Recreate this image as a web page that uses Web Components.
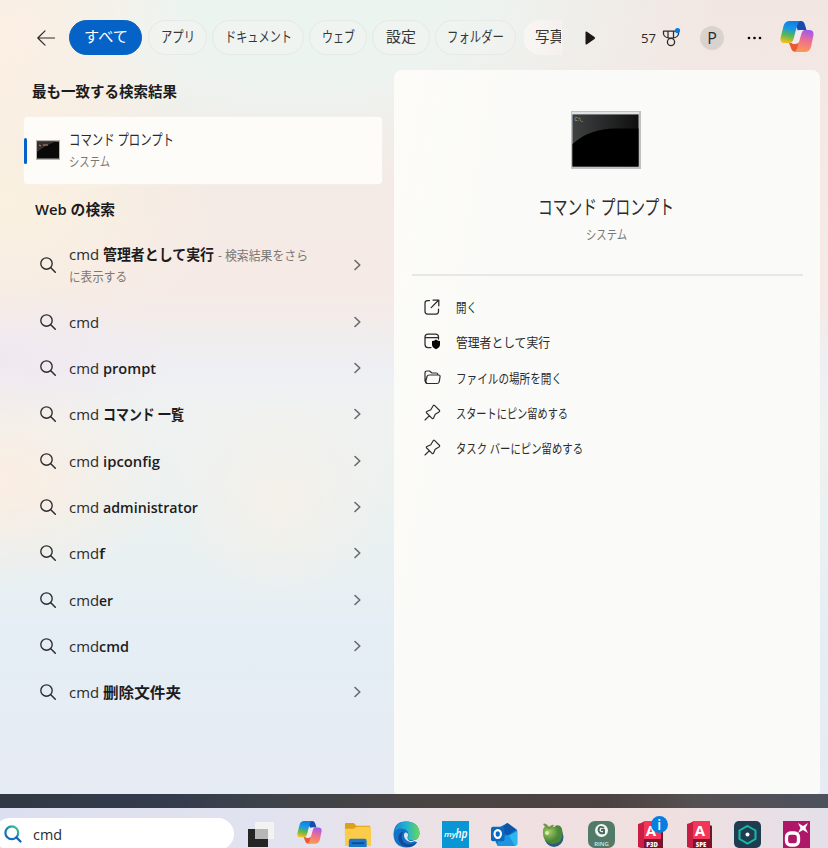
<!DOCTYPE html>
<html lang="ja"><head><meta charset="utf-8"><title>検索</title>
<style>html,body{margin:0;width:828px;height:848px;overflow:hidden;font-family:"Open Sans","Noto Sans CJK JP",sans-serif;color:#2b2b2d}</style></head>
<body><search-desktop></search-desktop>
<script>
const copilot='<defs><linearGradient id="a" x1=".6" y1="0" x2=".4" y2="1"><stop stop-color="#127de3"/><stop offset=".35" stop-color="#1698e6"/><stop offset=".68" stop-color="#5db84c"/><stop offset="1" stop-color="#f3bd20"/></linearGradient><linearGradient id="b" x1=".6" y1="0" x2=".4" y2="1"><stop stop-color="#a258ed"/><stop offset=".48" stop-color="#f0708d"/><stop offset="1" stop-color="#fb9a52"/></linearGradient></defs><path d="M9 22H14Q17 22 18 18L20 24L18 31H16Q12 31 11 27Z" fill="#ec5a35"/><path d="M17 0H21Q24 0 25 4L26.500 9H22Q20 9 19 12L16 5Z" fill="#164cac"/><path d="M9.500 0H20Q18 1 17 5L13.500 18Q12.500 22 9 22H4Q0 22 .5 17L3.500 5Q5 0 9.500 0Z" fill="url(#a)"/><path d="M24 9H29Q34 9 33.500 14L31 26Q29.500 31 25 31H14.500Q16.500 30 17.500 26L20.500 12Q21.500 9 24 9Z" fill="url(#b)"/><path d="M19.500 9H24Q22 10 21.300 13L19 21Q18 23 15 23H12Q13.500 22 14.500 18L16.500 11Q17 9 19.500 9Z" fill="#f3e9ee"/>';
const S='fill="none" stroke-linecap="round" stroke-linejoin="round" stroke="currentColor"';
const acad=(t)=>`<path d="M4 2L8 0V27H4L1 26V3Z" fill="#c91e43"/><path d="M7 0H24V18H7Z" fill="#f53558"/><path d="M24 4L26 5V27H24Z" fill="#6c1930"/><path d="M7 18H25V27H7Z" fill="#80102c"/><text x="14" y="14.500" font-size="15" font-weight="700" fill="#fff" text-anchor="middle">A</text><text x="15" y="25.500" font-size="6" font-weight="800" fill="#fff" text-anchor="middle">${t}</text>`;
const ICONS={
back:[18,16,`<path d="M17.500 8H.8M8 .8L.8 8L8 15.200" ${S} stroke-width="1.200"/>`],
search:[16,16,`<circle cx="6.500" cy="6.500" r="5.700" ${S} stroke-width="1.350"/><path d="M10.800 10.800L15.300 15.300" ${S} stroke-width="1.500"/>`],
chev:[7,12,`<path d="M1 1.500L5.800 6L1 10.500" fill="none" stroke-linecap="round" stroke-linejoin="round" stroke="#69696b" stroke-width="1.600"/>`],
play:[11,14,'<path d="M.5 1.500Q.5 0 2 .8L9.500 6Q10.800 7 9.500 8L2 13.200Q.5 14 .5 12.500Z" fill="#1d1717"/>'],
medal:[18,19,`<path d="M1.500 3H16.500V6Q16 9 11.500 10H6.500Q2 9 1.500 6ZM6 3V9.500M11.500 3V9.500" ${S} stroke-width="1.250"/><circle cx="9" cy="14" r="3.600" ${S} stroke-width="1.300"/><circle cx="15.500" cy="2.600" r="2.600" fill="#087be0"/>`],
dots:[16,4,'<circle cx="2" cy="2" r="1.350"/><circle cx="7.500" cy="2" r="1.350"/><circle cx="13" cy="2" r="1.350"/>'],
copilot:[34,32,copilot],
cmds:[24,20,'<path fill="#b9b4b1" d="M0 0H24V20H0Z"/><path fill="#090909" d="M1 1.500H23V18.500H1Z"/><path fill="#39302e" d="M1 1.500H20Q10 5 1 12Z"/><path d="M3 5L5 6M7 5H12" stroke="#b8887d"/>'],
cmd:[70,58,'<defs><linearGradient id="g" x2="1"><stop stop-color="#404142"/><stop offset="1" stop-color="#0f0f0f"/></linearGradient></defs><path fill="#c0c1c3" d="M0 0H70V58H0Z"/><path fill="#e1e2e3" d="M1 1H68V3H1Z"/><path fill="url(#g)" d="M1.500 3.500H67.500V55.500H1.500Z"/><path d="M1.500 33Q20 16 50 17.500H67.500V55.500H1.500Z"/><text x="3.500" y="10" font-size="5" fill="#bbb">C:\\_</text>'],
open:[16,16,`<path d="M5.500 1.500H3.500Q1 1.500 1 4V12.500Q1 15 3.500 15H12Q14.500 15 14.500 12.500V10M9 1H14.800V6.800M14.500 1.300L7.200 8.600" ${S} stroke-width="1.250"/>`],
admin:[17,17,`<path d="M7 14.500H4Q1 14.500 1 11.500V4Q1 1 4 1H11.500Q14.500 1 14.500 4V6M1 4.500H14.500" ${S} stroke-width="1.250"/><path d="M12 6.500Q13.800 8 16 8V11.500Q16 14.500 12 16.300Q8 14.500 8 11.500V8Q10.200 8 12 6.500Z" fill="#050505"/>`],
folder:[17,15,`<path d="M2.500 12.500L1 11V3Q1 1 3 1H5.500L8 3H12Q14 3 14 5M3 13.500Q1.300 13.500 1.700 11.500L3 6.500Q3.500 5 5 5H14.500Q16.400 5 16 7L15.200 11.800Q14.700 13.500 13 13.500Z" ${S} stroke-width="1.200"/>`],
pin:[17,17,`<path d="M1 16L5.200 11.800M10.500 1.400L15.600 6.500Q16 7.500 15 8L11.200 10.200L9.500 14.200Q9 15.200 8 14.300L2.700 9Q1.800 8 2.900 7.500L6.800 5.800L9 2Q9.700 .8 10.500 1.400Z" ${S} stroke-width="1.150"/>`],
bing:[18,18,'<defs><linearGradient id="a" x1="1" x2="0" y2="1"><stop stop-color="#52ce83"/><stop offset=".5" stop-color="#1686b7"/><stop offset="1" stop-color="#125ebb"/></linearGradient></defs><circle cx="7.800" cy="7.800" r="6.400" fill="none" stroke="url(#a)" stroke-width="2.200"/><path d="M12.500 12.500L16.500 16.500" stroke="#1263b7" stroke-width="2.300" stroke-linecap="round"/>'],
task:[27,27,'<path d="M1 8H21V26H1Z" fill="#252525"/><path d="M8 1H27V18H8Z" fill="#f3f3f2"/><path d="M8 8H21V18H8Z" fill="#b7b7b7"/>'],
files:[28,27,'<path d="M1 3Q1 2 2 2H10L13 5H27V15H1Z" fill="#dca01c"/><path d="M1 8H10L13 6H28V26H1Z" fill="#fbcb4a"/><path d="M5 21Q5 18.500 7 18.500H21.500Q23.500 18.500 23.500 21V27H5Z" fill="#1a78cc"/><path d="M8 22H21V24H8Z" fill="#0b4e96"/>'],
edge:[28,28,'<defs><linearGradient id="a" x2="1"><stop stop-color="#1987d5"/><stop offset=".5" stop-color="#23b4cc"/><stop offset="1" stop-color="#6cd658"/></linearGradient></defs><path d="M.5 14Q1 0 14 .5Q27 1 27.500 13Q27 20 20 20L25 22Q21 27.500 14 27.500Q1 27 .5 14Z" fill="#1272c6"/><path d="M1 12Q3 0 14 .5Q27 1 27.500 13Q27 20 20 20Q14 20 16 16Q17 9 10 8Q4 7 1 12Z" fill="url(#a)"/><path d="M11 11Q7 16 11 22Q16 26 25 22Q20 29 11 26Q4 22 6 15Q8 11 11 11Z" fill="#144a99"/><path d="M12.500 12Q17 12 15 17Q15 22 23 20.500Q17 24 13 19Q10 15 12.500 12Z" fill="#e5e3ec"/>'],
hp:[27,27,'<path fill="#0897d4" d="M0 0H27V27H0Z"/><text x="2" y="16" font-size="7.500" font-weight="600" fill="#fff" font-style="italic" textLength="12" lengthAdjust="spacingAndGlyphs">my</text><text x="13.500" y="17" font-size="12" font-weight="600" fill="#fff" font-style="italic" textLength="12" lengthAdjust="spacingAndGlyphs">hp</text>'],
outlook:[28,27,'<path d="M6 8L17 2L27 9V23L22 26H7L5 22Z" fill="#1478ca"/><path d="M8 9L17 2L26 9L17 15Z" fill="#0b55aa"/><path d="M15 17L27.500 10V23Q27.500 26 23 26H8Z" fill="#2eb6f0"/><path d="M7 19L18 14L25 26H7Z" fill="#1c94df"/><rect x="0" y="6" width="14" height="15" rx="2" fill="#0869bd"/><ellipse cx="7" cy="13.500" rx="3.300" ry="4" fill="none" stroke="#fff" stroke-width="2.200"/>'],
apple:[27,27,'<defs><radialGradient id="g" cx=".3" cy=".35"><stop stop-color="#a6cf62"/><stop offset="1" stop-color="#4a8839"/></radialGradient></defs><ellipse cx="15" cy="16" rx="9.500" ry="10" fill="#2b5c7e"/><path d="M4 9Q5 4 10 5.500Q14 8 17 4.500Q23 3 23.500 11Q24 22 14 23Q3 22 4 9Z" fill="url(#g)"/><path d="M4 3Q7 1 10 6Q13 3 15 4Q13 9 9 8Q6 7 4 3Z" fill="#74984a"/><circle cx="8" cy="12" r="2" fill="#d8e9ae"/>'],
ring:[27,27,'<rect width="27" height="27" rx="7" fill="#527a68"/><circle cx="13.500" cy="9.500" r="6.500" fill="#f2f7f4"/><path d="M16 7Q11 4 10.500 9Q11 13 16 12V9H13" stroke="#476e5d" stroke-width="2" fill="none"/><text x="13.500" y="24.500" font-size="6" font-weight="600" fill="#dce7df" text-anchor="middle">RING</text>'],
p3d:[27,27,acad('P3D')],spe:[27,27,acad('SPE')],
hex:[27,27,'<rect width="27" height="27" rx="5" fill="#203c50"/><path d="M13.500 5L21.500 9.500V18L13.500 22.500L5.500 18V9.500Z" fill="none" stroke="#14bba5" stroke-width="2"/><circle cx="13.500" cy="13.500" r="2" fill="#fff"/>'],
pink:[27,27,'<path fill="#ae1767" d="M0 0H27V27H0Z"/><rect x="3.500" y="12" width="12" height="12" rx="4" fill="none" stroke="#fff" stroke-width="3.300"/><path d="M15 2L20 5L25 2L22.500 7L25 12L20 9L15 12L17.500 7Z" fill="#fff"/>']
};
class UiIcon extends HTMLElement{connectedCallback(){const [w,h,p]=ICONS[this.getAttribute('name')];const W=this.getAttribute('w')||w;this.attachShadow({mode:'open'}).innerHTML=`<style>:host{display:block;flex:none}svg{display:block;overflow:visible;font-family:"Open Sans",sans-serif}</style><svg width="${W}" height="${h*W/w}" viewBox="0 0 ${w} ${h}">${p}</svg>`}}
customElements.define('ui-icon',UiIcon);
/* Text condensed horizontally to a given advance width. */
class FitText extends HTMLElement{connectedCallback(){const r=this.attachShadow({mode:'open'});r.innerHTML='<style>:host{display:inline-block;white-space:nowrap;flex:none}span{display:inline-block;transform-origin:0 50%}</style><span><slot></slot></span>';const s=r.firstElementChild.nextElementSibling,w=+this.getAttribute('w');const n=s.getBoundingClientRect().width;this.style.width=w+'px';s.style.transform=`scaleX(${w/n})`}}
customElements.define('fit-text',FitText);
class FilterChip extends HTMLElement{connectedCallback(){this.attachShadow({mode:'open'}).innerHTML=`<style>:host{box-sizing:border-box;display:flex;align-items:center;justify-content:center;flex:none;height:35px;border-radius:18px;border:1px solid #e6e9e5;background:#f6f6f34d;font-size:14.500px;line-height:20px;padding-bottom:2px;color:#343638}:host([active]){background:#0563c7;border-color:#0563c7;color:#fff}:host([cut]){border-color:transparent;border-radius:18px 0 0 18px;justify-content:flex-start;padding-left:11px;overflow:hidden;background:linear-gradient(90deg,#f8f6f4,#f5f0ed)}</style><slot></slot>`}}
customElements.define('filter-chip',FilterChip);
class SearchHeader extends HTMLElement{connectedCallback(){const c=[['すべて',73,44,6],['アプリ',59,34,5],['ドキュメント',92,67,5],['ウェブ',58,33,5],['設定',58,30,5],['フォルダー',81,57,7],['写真',39,29,0]];
this.attachShadow({mode:'open'}).innerHTML=`<style>:host{display:flex;align-items:center;height:70px;box-sizing:border-box;padding:5px 14px 0 37px}.c{display:flex;margin-left:14px}.s{font-size:13px;line-height:20px;margin-left:45px}.p{width:24px;height:24px;border-radius:50%;background:#dad2ce;display:grid;place-items:center;font-size:16px;line-height:24px;margin-left:20px;font-weight:500}</style><ui-icon name="back"></ui-icon><div class="c">${c.map((x,i)=>`<filter-chip ${i==0?'active':i==6?'cut':''} style="width:${x[1]}px;margin-right:${x[3]}px"><fit-text w="${x[2]}">${x[0]}</fit-text></filter-chip>`).join('')}</div><ui-icon name="play" style="margin-left:23px"></ui-icon><span class="s"><fit-text w="15">57</fit-text></span><ui-icon name="medal" style="margin-left:6px"></ui-icon><span class="p">P</span><ui-icon name="dots" style="margin-left:23px"></ui-icon><ui-icon name="copilot" style="margin-left:17px;margin-top:-1px"></ui-icon>`}}
customElements.define('search-header',SearchHeader);
class BestMatch extends HTMLElement{connectedCallback(){this.attachShadow({mode:'open'}).innerHTML=`<style>:host{display:flex;align-items:center;width:358px;height:67px;background:#fdfcf9;border-radius:4px;box-shadow:0 0 2px #fff8}i{width:3px;height:26px;background:#0562c8;border-radius:2px;margin-right:9px}.t{margin-left:9px;display:grid;padding-bottom:2px}.t :first-child{font-size:15px;line-height:23px}.t :last-child{font-size:13px;line-height:20px;color:#777774}</style><i></i><ui-icon name="cmds" style="margin-top:-1px"></ui-icon><div class="t"><fit-text w="105">コマンド プロンプト</fit-text><fit-text w="41">システム</fit-text></div>`}}
customElements.define('best-match',BestMatch);
class WebResult extends HTMLElement{connectedCallback(){this.attachShadow({mode:'open'}).innerHTML=`<style>:host{display:flex;align-items:center;height:46.350px;padding:0 21px 0 16px;font-size:15px;line-height:22px}div{flex:1;margin-left:13px;white-space:nowrap}</style><ui-icon name="search"></ui-icon><div><slot></slot></div><ui-icon name="chev"></ui-icon>`}}
customElements.define('web-result',WebResult);
class ResultsPane extends HTMLElement{connectedCallback(){const r=[['',0],['prompt',53],['コマンド 一覧',81],['ipconfig',57],['administrator',95],['f',6,1],['er',14,1],['cmd',30,1],['删除文件夹',78]];
this.attachShadow({mode:'open'}).innerHTML=`<style>:host{display:block;width:358px;padding-left:24px}h2{margin:0;font-size:14.500px;line-height:22px;font-weight:600;color:#1c1c1e}b{font-weight:600;color:#1c1c1e}.g{color:#7b7976;font-size:13px}</style><h2 style="padding:11px 0 14px 8px"><fit-text w="145">最も一致する検索結果</fit-text></h2><best-match></best-match><h2 style="padding:15px 0 17px 11px"><fit-text w="80">Web の検索</fit-text></h2><web-result style="height:54.500px;margin-bottom:6px"><div style="margin-top:-2px;line-height:22px"><fit-text w="30">cmd</fit-text><b style="margin-left:4px"><fit-text w="111">管理者として実行</fit-text></b><span class="g" style="margin-left:4px"><fit-text w="90">- 検索結果をさら</fit-text></span></div><div class="g" style="line-height:20px"><fit-text w="58">に表示する</fit-text></div></web-result>${r.map(x=>`<web-result><fit-text w="30">cmd</fit-text>${x[0]?`<b style="margin-left:${x[2]?0:4}px"><fit-text w="${x[1]}">${x[0]}</fit-text></b>`:''}</web-result>`).join('')}`}}
customElements.define('results-pane',ResultsPane);
class ActionItem extends HTMLElement{connectedCallback(){this.attachShadow({mode:'open'}).innerHTML=`<style>:host{display:flex;height:35.300px;align-items:center;font-size:13px;line-height:20px;padding-left:30px}span{display:flex;width:17px;margin-right:15px;padding-bottom:1px}</style><span><ui-icon name="${this.getAttribute('icon')}"></ui-icon></span><slot></slot>`}}
customElements.define('action-item',ActionItem);
class DetailPane extends HTMLElement{connectedCallback(){const a=[['open','開く',21],['admin','管理者として実行',94],['folder','ファイルの場所を開く',106],['pin','スタートにピン留めする',112],['pin','タスク バーにピン留めする',127]];
this.attachShadow({mode:'open'}).innerHTML=`<style>:host{display:block;box-sizing:border-box;width:426px;height:724px;background:linear-gradient(100deg,#fdfcf7,#fafaf8 25%,#fafaf8);border-radius:8px 8px 3px 3px;padding-top:41px}.h{display:flex;flex-direction:column;align-items:center;margin-right:2px}hr{border:0;height:1.500px;background:#e8e7e4;margin:30px 17px 14px 18px}</style><div class="h"><ui-icon name="cmd"></ui-icon><fit-text w="136" style="font-size:20px;line-height:30px;margin-top:24px">コマンド プロンプト</fit-text><fit-text w="41" style="font-size:13px;line-height:20px;color:#777;margin-top:1px">システム</fit-text></div><hr>${a.map(x=>`<action-item icon="${x[0]}"><fit-text w="${x[2]}">${x[1]}</fit-text></action-item>`).join('')}`}}
customElements.define('detail-pane',DetailPane);
class TaskBar extends HTMLElement{connectedCallback(){const t=['task','copilot','files','edge','hp','outlook','apple','ring','p3d','spe','hex','pink'];
this.attachShadow({mode:'open'}).innerHTML=`<style>:host{display:flex;height:40px;background:linear-gradient(90deg,#dcdff0,#e2e3ef 35%,#efe0e1 60%,#f0dfdf 80%,#e4e0e9)}.s{display:flex;box-sizing:border-box;align-items:center;height:32px;width:240px;margin:10px 2px 0 -6px;padding-left:10px;background:#fff;border-radius:16px;font-size:15px;line-height:22px;flex:none}.i{width:48.750px;flex:none;padding-top:13px;display:flex;justify-content:center;position:relative}.n{position:absolute;right:7px;top:8px;width:17px;height:17px;border-radius:50%;background:#087fe0;color:#fff;font-size:14px;line-height:17px;text-align:center;font-weight:600}</style><div class="s"><ui-icon name="bing"></ui-icon><fit-text w="29" style="margin-left:11px">cmd</fit-text></div>${t.map(x=>`<div class="i"><ui-icon name="${x}" w="${x=='copilot'?25:27}"></ui-icon>${x=='p3d'?'<span class="n">i</span>':''}</div>`).join('')}`}}
customElements.define('task-bar',TaskBar);
class SearchDesktop extends HTMLElement{connectedCallback(){this.attachShadow({mode:'open'}).innerHTML=`<style>:host{display:block;width:828px;height:848px;overflow:hidden}.w{height:794px;background:radial-gradient(ellipse 110px 110px at 280px 500px,#f4f0e9 0,#f4f0e900),radial-gradient(ellipse 170px 110px at 0 480px,#fbede1 0,#fbede100),radial-gradient(ellipse 170px 70px at 0 360px,#f1e8ef 0,#f1e8ef00),radial-gradient(ellipse 220px 150px at 0 200px,#faf1e0 0,#faf1e000),radial-gradient(ellipse 190px 190px at 0 40px,#fdf0e3 0,#fdf0e300),radial-gradient(ellipse 420px 190px at 300px 0,#ecf4f0 0,#edf4f0 40%,#eef4f000),linear-gradient(#f2e6e2 0,#f5ebe6 30%,#f5eae6 37%,#eeeff3 46%,#eff2f0 53%,#eaf1f1 67%,#e5eef5 80%,#e7ebf3)}.b{display:flex;gap:12px}.d{height:14px;background:linear-gradient(90deg,#323945,#343b4c 20%,#3c424b 30%,#494443 50%,#4c4241 73%,#555052 84%,#4c515d)}</style><div class="w"><search-header></search-header><div class="b"><results-pane></results-pane><detail-pane></detail-pane></div></div><div class="d"></div><task-bar></task-bar>`}}
customElements.define('search-desktop',SearchDesktop);
</script></body></html>
